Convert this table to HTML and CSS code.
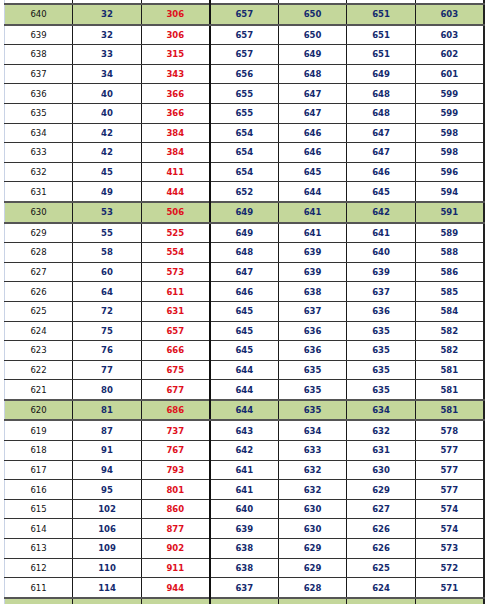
FILE: index.html
```html
<!DOCTYPE html>
<html>
<head>
<meta charset="utf-8">
<link rel="stylesheet" href="styles.css">
</head>
<body>
<div class="viewport">
<table class="grid">
<colgroup>
<col class="c1"><col class="c2"><col class="c3"><col class="c4"><col class="c5"><col class="c6"><col class="c7">
</colgroup>
<tbody>
<tr class="edge"><td></td><td></td><td></td><td class="sep"></td><td></td><td></td><td></td></tr>
<tr class="g"><td>640</td><td class="b">32</td><td class="r">306</td><td class="b sep">657</td><td class="b">650</td><td class="b">651</td><td class="b">603</td></tr>
<tr><td>639</td><td class="b">32</td><td class="r">306</td><td class="b sep">657</td><td class="b">650</td><td class="b">651</td><td class="b">603</td></tr>
<tr><td>638</td><td class="b">33</td><td class="r">315</td><td class="b sep">657</td><td class="b">649</td><td class="b">651</td><td class="b">602</td></tr>
<tr><td>637</td><td class="b">34</td><td class="r">343</td><td class="b sep">656</td><td class="b">648</td><td class="b">649</td><td class="b">601</td></tr>
<tr><td>636</td><td class="b">40</td><td class="r">366</td><td class="b sep">655</td><td class="b">647</td><td class="b">648</td><td class="b">599</td></tr>
<tr><td>635</td><td class="b">40</td><td class="r">366</td><td class="b sep">655</td><td class="b">647</td><td class="b">648</td><td class="b">599</td></tr>
<tr><td>634</td><td class="b">42</td><td class="r">384</td><td class="b sep">654</td><td class="b">646</td><td class="b">647</td><td class="b">598</td></tr>
<tr><td>633</td><td class="b">42</td><td class="r">384</td><td class="b sep">654</td><td class="b">646</td><td class="b">647</td><td class="b">598</td></tr>
<tr><td>632</td><td class="b">45</td><td class="r">411</td><td class="b sep">654</td><td class="b">645</td><td class="b">646</td><td class="b">596</td></tr>
<tr><td>631</td><td class="b">49</td><td class="r">444</td><td class="b sep">652</td><td class="b">644</td><td class="b">645</td><td class="b">594</td></tr>
<tr class="g"><td>630</td><td class="b">53</td><td class="r">506</td><td class="b sep">649</td><td class="b">641</td><td class="b">642</td><td class="b">591</td></tr>
<tr><td>629</td><td class="b">55</td><td class="r">525</td><td class="b sep">649</td><td class="b">641</td><td class="b">641</td><td class="b">589</td></tr>
<tr><td>628</td><td class="b">58</td><td class="r">554</td><td class="b sep">648</td><td class="b">639</td><td class="b">640</td><td class="b">588</td></tr>
<tr><td>627</td><td class="b">60</td><td class="r">573</td><td class="b sep">647</td><td class="b">639</td><td class="b">639</td><td class="b">586</td></tr>
<tr><td>626</td><td class="b">64</td><td class="r">611</td><td class="b sep">646</td><td class="b">638</td><td class="b">637</td><td class="b">585</td></tr>
<tr><td>625</td><td class="b">72</td><td class="r">631</td><td class="b sep">645</td><td class="b">637</td><td class="b">636</td><td class="b">584</td></tr>
<tr><td>624</td><td class="b">75</td><td class="r">657</td><td class="b sep">645</td><td class="b">636</td><td class="b">635</td><td class="b">582</td></tr>
<tr><td>623</td><td class="b">76</td><td class="r">666</td><td class="b sep">645</td><td class="b">636</td><td class="b">635</td><td class="b">582</td></tr>
<tr><td>622</td><td class="b">77</td><td class="r">675</td><td class="b sep">644</td><td class="b">635</td><td class="b">635</td><td class="b">581</td></tr>
<tr><td>621</td><td class="b">80</td><td class="r">677</td><td class="b sep">644</td><td class="b">635</td><td class="b">635</td><td class="b">581</td></tr>
<tr class="g"><td>620</td><td class="b">81</td><td class="r">686</td><td class="b sep">644</td><td class="b">635</td><td class="b">634</td><td class="b">581</td></tr>
<tr><td>619</td><td class="b">87</td><td class="r">737</td><td class="b sep">643</td><td class="b">634</td><td class="b">632</td><td class="b">578</td></tr>
<tr><td>618</td><td class="b">91</td><td class="r">767</td><td class="b sep">642</td><td class="b">633</td><td class="b">631</td><td class="b">577</td></tr>
<tr><td>617</td><td class="b">94</td><td class="r">793</td><td class="b sep">641</td><td class="b">632</td><td class="b">630</td><td class="b">577</td></tr>
<tr><td>616</td><td class="b">95</td><td class="r">801</td><td class="b sep">641</td><td class="b">632</td><td class="b">629</td><td class="b">577</td></tr>
<tr><td>615</td><td class="b">102</td><td class="r">860</td><td class="b sep">640</td><td class="b">630</td><td class="b">627</td><td class="b">574</td></tr>
<tr><td>614</td><td class="b">106</td><td class="r">877</td><td class="b sep">639</td><td class="b">630</td><td class="b">626</td><td class="b">574</td></tr>
<tr><td>613</td><td class="b">109</td><td class="r">902</td><td class="b sep">638</td><td class="b">629</td><td class="b">626</td><td class="b">573</td></tr>
<tr><td>612</td><td class="b">110</td><td class="r">911</td><td class="b sep">638</td><td class="b">629</td><td class="b">625</td><td class="b">572</td></tr>
<tr><td>611</td><td class="b">114</td><td class="r">944</td><td class="b sep">637</td><td class="b">628</td><td class="b">624</td><td class="b">571</td></tr>
<tr class="g"><td></td><td></td><td></td><td class="sep"></td><td></td><td></td><td></td></tr>
</tbody>
</table>
</div>
</body>
</html>
```

FILE: styles.css
```css
html, body {
  margin: 0;
  padding: 0;
  background: #ffffff;
}
.viewport {
  width: 487px;
  height: 604px;
  overflow: hidden;
  padding-left: 4px;
  box-sizing: border-box;
}
.grid {
  border-collapse: collapse;
  table-layout: fixed;
  width: 479px;
  font-family: "DejaVu Sans", Verdana, sans-serif;
  font-size: 8.5px;
  border-left: 1px solid #c9d3e6;
  border-right: 2px solid #222222;
}
.c1 { width: 68px; }
.c2 { width: 69px; }
.c3 { width: 68px; }
.c4 { width: 69px; }
.c5 { width: 68px; }
.c6 { width: 69px; }
.c7 { width: 68px; }
.grid td {
  height: 18.6px;
  padding: 0;
  text-align: center;
  vertical-align: middle;
  color: #111111;
  border-top: 1px solid #333333;
  border-bottom: 1px solid #333333;
  border-left: 1px solid #1a1a1a;
  line-height: 10px;
}
.grid tr.edge td {
  height: 3px;
  border-top: 0;
}
.grid td:first-child {
  border-left: 1px solid #c9d3e6;
}
.grid td.sep {
  border-left: 2px solid #111111;
}
.grid td.b {
  font-weight: bold;
  color: #142a6e;
}
.grid td.r {
  font-weight: bold;
  color: #e0101c;
}
.grid tr.g td {
  background: #c4d79b;
  border-top: 2px solid #555555;
  border-bottom: 2px solid #555555;
}
```
